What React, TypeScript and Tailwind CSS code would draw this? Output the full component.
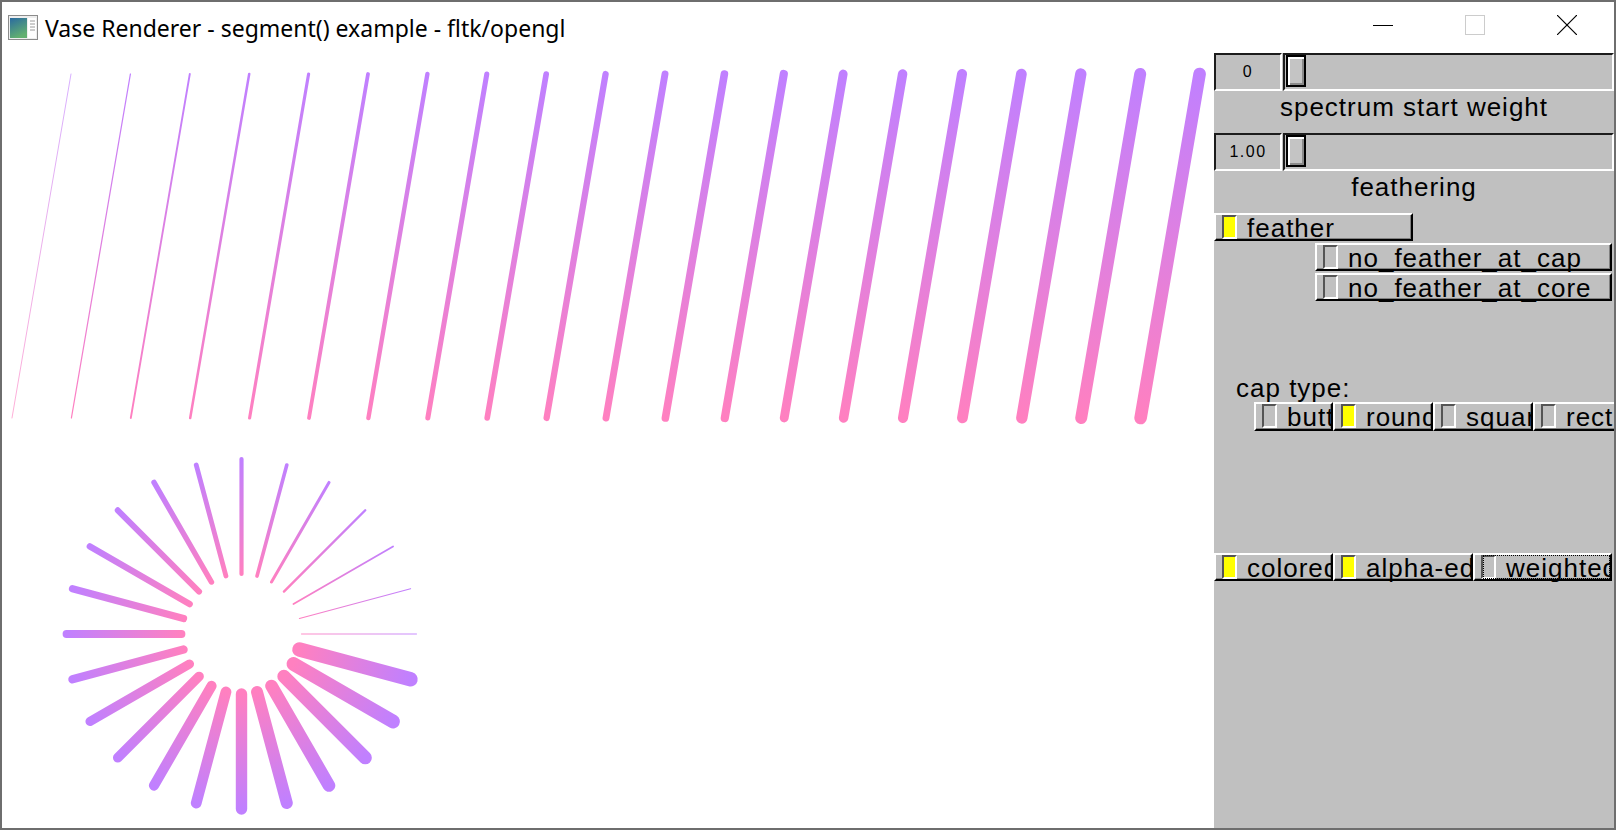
import React from 'react';

const PURPLE = '#c080ff';
const PINK = '#ff80c0';

type Seg = { x1: number; y1: number; x2: number; y2: number; w: number };

// canvas starts at page (2, 53); data below is in page coordinates
const OX = 2;
const OY = 53;

const strokes: Seg[] = Array.from({ length: 20 }, (_, i) => ({
  x1: 12 + 59.4 * i - OX,
  y1: 418 - OY,
  x2: 71 + 59.4 * i - OX,
  y2: 74 - OY,
  w: 0.63 * (i + 1),
}));

const CX = 241.5 - OX;
const CY = 634 - OY;
const spokes: Seg[] = Array.from({ length: 24 }, (_, k) => {
  const a = (k * Math.PI) / 12;
  const c = Math.cos(a);
  const s = Math.sin(a);
  return {
    x1: CX + 60 * c,
    y1: CY - 60 * s,
    x2: CX + 175 * c,
    y2: CY - 175 * s,
    w: Math.max(0.9, 0.6 * (k + 1)),
  };
});

const segs = [...strokes, ...spokes];

function GlCanvas() {
  return (
    <div className="h-full w-[1212px] shrink-0 bg-white">
      <svg width={1212} height={775}>
        <defs>
          {segs.map((s, i) => (
            <linearGradient
              key={i}
              id={`seg${i}`}
              gradientUnits="userSpaceOnUse"
              x1={s.x1}
              y1={s.y1}
              x2={s.x2}
              y2={s.y2}
            >
              <stop offset="0" stopColor={PINK} />
              <stop offset="1" stopColor={PURPLE} />
            </linearGradient>
          ))}
        </defs>
        {segs.map((s, i) => (
          <line
            key={i}
            x1={s.x1}
            y1={s.y1}
            x2={s.x2}
            y2={s.y2}
            stroke={`url(#seg${i})`}
            strokeWidth={s.w}
            strokeLinecap="round"
          />
        ))}
      </svg>
    </div>
  );
}

function ValueSlider({ value }: { value: string }) {
  return (
    <div className="flex h-[38px] shrink-0 gap-[1px]">
      <div className="flex w-[68px] items-center justify-center border-2 border-t-[#1c1c1c] border-l-[#1c1c1c] border-b-white border-r-white text-[16px] tracking-[1.5px]">
        {value}
      </div>
      <div className="flex flex-1 items-start border-2 border-t-[#1c1c1c] border-l-[#1c1c1c] border-b-white border-r-white pl-[1px]">
        <div className="h-[32px] w-[20px] border-2 border-black bg-[#c4c4c4] shadow-[inset_2px_2px_0_#ffffff,inset_-2px_-2px_0_#8a8a8a]" />
      </div>
    </div>
  );
}

function LightButton({
  label,
  on = false,
  size,
  focus = false,
}: {
  label: string;
  on?: boolean;
  size: string;
  focus?: boolean;
}) {
  return (
    <div
      className={`relative flex shrink-0 overflow-x-clip border-2 border-t-white border-l-white border-b-black border-r-black shadow-[inset_-1px_-1px_0_#808080] ${size}`}
    >
      <div
        className={`ml-[6px] h-[24px] w-[15px] shrink-0 border-2 border-t-[#555555] border-l-[#555555] border-b-white border-r-white ${
          on ? 'bg-[#ffff00]' : 'bg-[#c0c0c0]'
        }`}
      />
      <span className="ml-[10px] whitespace-nowrap pt-[2px] leading-[22px]">{label}</span>
      {focus && <div className="absolute top-0 right-0 bottom-0 left-[8px] border border-dotted border-black" />}
    </div>
  );
}

function Panel() {
  return (
    <div className="flex h-full w-[400px] shrink-0 flex-col overflow-hidden bg-[#c0c0c0] font-['Liberation_Sans',Arial,sans-serif] text-[26px] tracking-[1px] text-black">
      <ValueSlider value="0" />
      <div className="h-[42px] shrink-0 pt-[2px] text-center leading-[28px]">spectrum start weight</div>
      <ValueSlider value="1.00" />
      <div className="h-[42px] shrink-0 pt-[2px] text-center leading-[28px]">feathering</div>

      <div className="flex flex-col gap-[2px]">
        <LightButton label="feather" on size="h-[28px] w-[199px]" />
        <div className="flex flex-col gap-[2px] pl-[101px]">
          <LightButton label="no_feather_at_cap" size="h-[28px] w-[297px]" />
          <LightButton label="no_feather_at_core" size="h-[28px] w-[297px]" />
        </div>
      </div>

      <div className="mt-[73px] pl-[22px] leading-[28px]">cap type:</div>
      <div className="flex pl-[40px]">
        <LightButton label="butt" size="h-[29px] w-[79px]" />
        <LightButton label="round" on size="h-[29px] w-[100px]" />
        <LightButton label="squar" size="h-[29px] w-[100px]" />
        <LightButton label="rect" size="h-[29px] w-[100px]" />
      </div>

      <div className="mt-[122px] flex">
        <LightButton label="colored" on size="h-[28px] w-[119px]" />
        <LightButton label="alpha-ed" on size="h-[28px] w-[140px]" />
        <LightButton label="weighted" focus size="h-[28px] w-[139px]" />
      </div>
    </div>
  );
}

function AppIcon() {
  return (
    <svg width="30" height="25" viewBox="0 0 30 25">
      <defs>
        <linearGradient id="appico" x1="0" y1="0" x2="0.4" y2="1">
          <stop offset="0" stopColor="#2a6aa0" />
          <stop offset="1" stopColor="#62b070" />
        </linearGradient>
      </defs>
      <rect x="0.5" y="0.5" width="29" height="24" fill="#eeeeee" stroke="#8c8c8c" />
      <rect x="2" y="3" width="17" height="20" fill="url(#appico)" />
      <rect x="20" y="3" width="8" height="20" fill="#ffffff" />
      <line x1="22" y1="6" x2="27" y2="6" stroke="#9a9a9a" />
      <line x1="22" y1="9" x2="27" y2="9" stroke="#9a9a9a" />
      <line x1="22" y1="12" x2="27" y2="12" stroke="#9a9a9a" />
      <line x1="22" y1="15" x2="27" y2="15" stroke="#9a9a9a" />
    </svg>
  );
}

function TitleBar() {
  return (
    <div className="flex h-[51px] shrink-0 items-start bg-white">
      <div className="ml-[6px] mt-[13px]">
        <AppIcon />
      </div>
      <div className="ml-[7px] pt-[11px] font-['Noto_Sans','Open_Sans',sans-serif] text-[23px] leading-[31px] text-black">
        Vase Renderer - segment() example - fltk/opengl
      </div>
      <div className="ml-auto mr-[1px] flex">
        <div className="flex w-[92px] justify-center pt-[13px]">
          <svg width="20" height="20">
            <line x1="0" y1="10.5" x2="20" y2="10.5" stroke="#000" />
          </svg>
        </div>
        <div className="flex w-[92px] justify-center pt-[13px]">
          <svg width="20" height="20">
            <rect x="0.5" y="0.5" width="19" height="19" fill="none" stroke="#cccccc" />
          </svg>
        </div>
        <div className="flex w-[92px] justify-center pt-[13px]">
          <svg width="20" height="20">
            <line x1="0" y1="0" x2="20" y2="20" stroke="#000" strokeWidth="1.2" />
            <line x1="20" y1="0" x2="0" y2="20" stroke="#000" strokeWidth="1.2" />
          </svg>
        </div>
      </div>
    </div>
  );
}

export default function App() {
  return (
    <div className="flex h-[830px] w-[1616px] flex-col border-2 border-[#6e6e6e] bg-white">
      <TitleBar />
      <div className="flex flex-1 overflow-hidden">
        <GlCanvas />
        <Panel />
      </div>
    </div>
  );
}
